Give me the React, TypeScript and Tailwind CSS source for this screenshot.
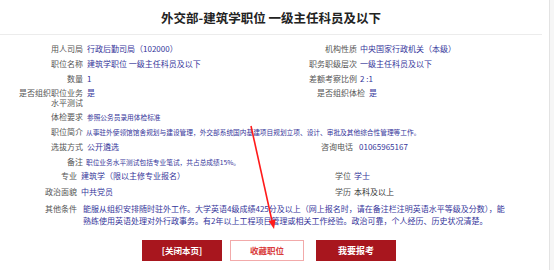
import React from "react";

const FONT = { fontFamily: '"Noto Sans CJK SC", "Noto Sans", "Liberation Sans", sans-serif' };

function Row({ children, className = "", cols = "grid-cols-[83px_194px_80px_1fr]" }: { children: React.ReactNode; className?: string; cols?: string }) {
  return <div className={"grid " + cols + " " + className}>{children}</div>;
}

const L = "text-right text-[#555] text-[8px] leading-[10px] whitespace-nowrap";
const V = "text-[#35359a] text-[8px] leading-[10px] whitespace-nowrap";

export default function App() {
  return (
    <div className="relative flex w-[554px] h-[270px] bg-[#f6f6f6] overflow-hidden" style={FONT}>
      <div className="w-[550px] h-full bg-white border-r border-[#e3e3e3]">
        <div className="w-[542px]">
          <div className="h-[35px] flex items-center justify-center pt-[2px] text-[12.5px] font-bold text-[#222] border-b border-[#ececec]">
            外交部-建筑学职位 一级主任科员及以下
          </div>
          <div className="pt-[6px]">
            <Row className="py-[2.5px]">
              <div className={L}>用人司局</div>
              <div className={V + " pl-[4px]"}>行政后勤司局（102000）</div>
              <div className={L}>机构性质</div>
              <div className={V + " pl-[3px]"}>中央国家行政机关（本级）</div>
            </Row>
            <Row className="py-[2.5px]">
              <div className={L}>职位名称</div>
              <div className={V + " pl-[4px]"}>建筑学职位 一级主任科员及以下</div>
              <div className={L}>职务职级层次</div>
              <div className={V + " pl-[3px]"}>一级主任科员及以下</div>
            </Row>
            <Row className="py-[2.5px]">
              <div className={L}>数量</div>
              <div className={V + " pl-[4px]"}>1</div>
              <div className={L}>差额考察比例</div>
              <div className={V + " pl-[3px]"}>2 :1</div>
            </Row>
            <Row className="py-[1.5px]" cols="grid-cols-[83px_194px_88px_1fr]">
              <div className="flex flex-col items-end text-[#555] text-[8px] leading-[10px]">
                <span className="whitespace-nowrap">是否组织职位业务</span>
                <span className="whitespace-nowrap">水平测试</span>
              </div>
              <div className={V + " pl-[4px]"}>是</div>
              <div className={L}>是否组织体检</div>
              <div className={V + " pl-[4px]"}>是</div>
            </Row>
            <div className="flex py-[2.5px]">
              <div className={L + " w-[83px] shrink-0"}>体检要求</div>
              <div className="pl-[4px] text-[#35359a] text-[6.7px] leading-[10px]">参照公务员录用体检标准</div>
            </div>
            <div className="flex py-[2.5px]">
              <div className={L + " w-[83px] shrink-0"}>职位简介</div>
              <div className="pl-[3px] text-[#35359a] text-[6.7px] leading-[10px] whitespace-nowrap">
                从事驻外使领馆馆舍规划与建设管理，外交部系统国内基建项目规划立项、设计、审批及其他综合性管理等工作。
              </div>
            </div>
            <Row className="py-[2.5px]">
              <div className={L}>选拔方式</div>
              <div className={V + " pl-[4px]"}>公开遴选</div>
              <div className={L + " pr-[4px]"}>咨询电话</div>
              <div className={V + " pl-[2px]"}>01065965167</div>
            </Row>
            <div className="flex py-[2.5px]">
              <div className={L + " w-[83px] shrink-0"}>备注</div>
              <div className="pl-[3px] text-[#35359a] text-[6.7px] leading-[10px]">职位业务水平测试包括专业笔试，共占总成绩15%。</div>
            </div>
          </div>
          <div className="grid grid-cols-[77px_258px_16px_1fr] py-[2px]">
            <div className={L}>专业</div>
            <div className={V + " pl-[4px]"}>建筑学（限以主修专业报名）</div>
            <div className={L}>学位</div>
            <div className={V + " pl-[3px]"}>学士</div>
          </div>
          <div className="grid grid-cols-[77px_258px_16px_1fr] pt-[4px] pb-[2px]">
            <div className={L}>政治面貌</div>
            <div className={V + " pl-[4px]"}>中共党员</div>
            <div className={L}>学历</div>
            <div className="pl-[3px] text-[#333] text-[8px] leading-[10px] whitespace-nowrap">本科及以上</div>
          </div>
          <div className="flex pt-[4px]">
            <div className={L + " w-[77px] shrink-0 pt-[1px]"}>其他条件</div>
            <div className="pl-[6px] w-[430px] text-[#35359a] text-[8px] leading-[12px]">
              能服从组织安排随时驻外工作。大学英语4级成绩425分及以上（网上报名时，请在备注栏注明英语水平等级及分数），能熟练使用英语处理对外行政事务。有2年以上工程项目管理或相关工作经验。政治可靠，个人经历、历史状况清楚。
            </div>
          </div>
          <div className="flex pl-[142px] pt-[13px]">
            <button className="w-[80px] h-[21px] bg-[#a8161e] text-white text-[8.5px] font-bold flex items-center justify-center">
              [关闭本页]
            </button>
            <button className="ml-[8px] w-[74px] h-[21px] bg-white border border-[#f2aaaa] text-[#d83a3a] text-[8.5px] font-bold flex items-center justify-center">
              收藏职位
            </button>
            <button className="ml-[12px] w-[80px] h-[21px] bg-[#a8161e] text-white text-[9px] font-bold flex items-center justify-center">
              我要报考
            </button>
          </div>
        </div>
      </div>
      <svg className="absolute left-0 top-0 pointer-events-none" width="554" height="270" viewBox="0 0 554 270">
        <line x1="251" y1="126" x2="272" y2="221" stroke="#ff1a1a" strokeWidth="1.6" />
        <polygon points="274,229 275.6,219.4 268.6,221" fill="#ff1a1a" />
      </svg>
    </div>
  );
}
